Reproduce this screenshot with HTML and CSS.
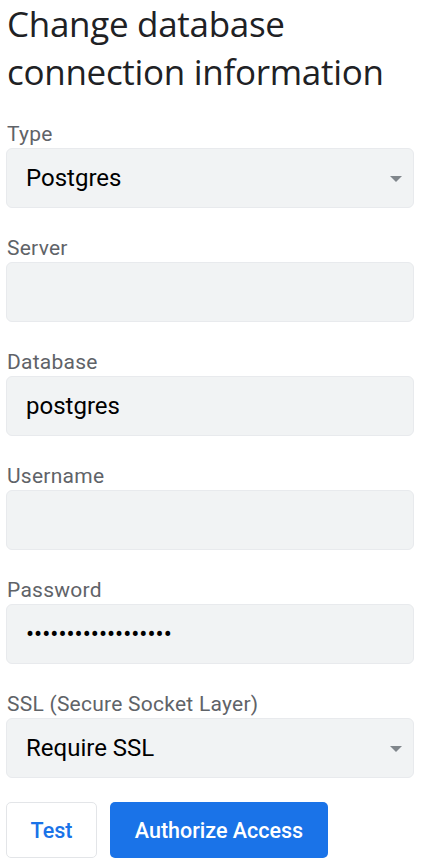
FILE: index.html
```html
<!DOCTYPE html>
<html lang="en">
<head>
  <meta charset="UTF-8">
  <title>Change database connection information</title>
  <link rel="stylesheet" href="styles.css">
</head>
<body>

  <h1>Change database connection information</h1>

  <div class="field">
    <label>Type</label>
    <div class="box select">Postgres</div>
  </div>

  <div class="field">
    <label>Server</label>
    <div class="box"></div>
  </div>

  <div class="field">
    <label>Database</label>
    <div class="box">postgres</div>
  </div>

  <div class="field">
    <label>Username</label>
    <div class="box"></div>
  </div>

  <div class="field">
    <label>Password</label>
    <div class="box password">&bull;&bull;&bull;&bull;&bull;&bull;&bull;&bull;&bull;&bull;&bull;&bull;&bull;&bull;&bull;&bull;&bull;&bull;</div>
  </div>

  <div class="field">
    <label>SSL (Secure Socket Layer)</label>
    <div class="box select">Require SSL</div>
  </div>

  <div class="actions">
    <button class="btn btn-outline">Test</button>
    <button class="btn btn-primary">Authorize Access</button>
  </div>

</body>
</html>
```

FILE: styles.css
```css
body {
  margin: 0;
  padding: 0 6px;
  width: 408px;
  font-family: Roboto, Arial, sans-serif;
  color: #202124;
  background: #fff;
}

h1 {
  font-family: "Open Sans", Roboto, sans-serif;
  font-weight: 400;
  font-size: 35px;
  line-height: 48px;
  margin: 0 0 0 1px;
  letter-spacing: -0.3px;
  padding-bottom: 26px;
}

.field {
  margin-bottom: 28px;
}

label {
  display: block;
  font-size: 21px;
  line-height: 24px;
  letter-spacing: 0.25px;
  color: #5f6368;
  margin-bottom: 2px;
  padding-left: 1px;
}

.box {
  position: relative;
  box-sizing: border-box;
  height: 60px;
  background: #f1f3f4;
  border: 1px solid #e8eaed;
  border-radius: 6px;
  padding: 0 19px;
  display: flex;
  align-items: center;
  font-size: 24px;
  color: #000;
}

.select::after {
  content: "";
  position: absolute;
  right: 11px;
  top: 27px;
  border-left: 6px solid transparent;
  border-right: 6px solid transparent;
  border-top: 6px solid #80868b;
}

.password {
  font-size: 24px;
}

.actions {
  display: flex;
  gap: 13px;
  margin-top: -4px;
}

.btn {
  height: 56px;
  border-radius: 5px;
  font-family: Roboto, Arial, sans-serif;
  font-size: 21.5px;
  font-weight: 500;
  cursor: pointer;
}

.btn-outline {
  width: 91px;
  background: #fff;
  border: 1px solid #e3e5e8;
  color: #1a73e8;
}

.btn-primary {
  width: 218px;
  background: #1a73e8;
  border: none;
  color: #fff;
}
```
